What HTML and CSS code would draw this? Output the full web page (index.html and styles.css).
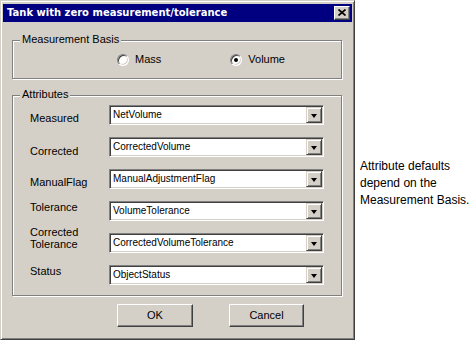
FILE: index.html
```html
<!DOCTYPE html>
<html>
<head>
<meta charset="utf-8">
<link rel="stylesheet" href="styles.css">
</head>
<body>
<div class="page">
  <div class="dialog">
    <div class="titlebar">
      <span class="title">Tank with zero measurement/tolerance</span>
      <span class="close">
        <svg width="8" height="7" viewBox="0 0 8 7"><path d="M0.5 0.5 L7.5 6.5 M7.5 0.5 L0.5 6.5" stroke="#000" stroke-width="1.7" fill="none"/></svg>
      </span>
    </div>

    <div class="group basis">
      <span class="legend">Measurement Basis</span>
      <label class="radio"><span class="radio-dot"></span><span>Mass</span></label>
      <label class="radio vol"><span class="radio-dot checked"></span><span>Volume</span></label>
    </div>

    <div class="group attrs">
      <span class="legend">Attributes</span>
      <div class="grid">
        <div class="lbl low">Measured</div>
        <div class="combo"><span class="val">NetVolume</span><span class="drop"><i></i></span></div>
        <div class="lbl lower">Corrected</div>
        <div class="combo"><span class="val">CorrectedVolume</span><span class="drop"><i></i></span></div>
        <div class="lbl low">ManualFlag</div>
        <div class="combo"><span class="val">ManualAdjustmentFlag</span><span class="drop"><i></i></span></div>
        <div class="lbl">Tolerance</div>
        <div class="combo"><span class="val">VolumeTolerance</span><span class="drop"><i></i></span></div>
        <div class="lbl up">Corrected<br>Tolerance</div>
        <div class="combo"><span class="val">CorrectedVolumeTolerance</span><span class="drop"><i></i></span></div>
        <div class="lbl">Status</div>
        <div class="combo"><span class="val">ObjectStatus</span><span class="drop"><i></i></span></div>
      </div>
    </div>

    <div class="buttons">
      <div class="btn ok">OK</div>
      <div class="btn cancel">Cancel</div>
    </div>
  </div>

  <div class="note">Attribute defaults<br>depend on the<br>Measurement Basis.</div>
</div>
</body>
</html>
```

FILE: styles.css
```css
html, body {
  margin: 0;
  padding: 0;
  background: #ffffff;
}

.page {
  display: flex;
  align-items: flex-start;
  font-family: "Liberation Sans", Arial, sans-serif;
  font-size: 11px;
  color: #000;
}

.dialog {
  box-sizing: border-box;
  width: 355px;
  height: 340px;
  background: #d4d0c8;
  border: 1px solid;
  border-color: #d4d0c8 #404040 #404040 #d4d0c8;
  box-shadow: inset 1px 1px 0 #ffffff, inset -1px -1px 0 #808080;
  padding: 3px 2px 0 2px;
  display: flex;
  flex-direction: column;
}

.titlebar {
  height: 18px;
  background: #000080;
  display: flex;
  align-items: center;
  justify-content: space-between;
  padding: 0 2px 0 4px;
}

.title {
  color: #ffffff;
  font-family: "DejaVu Sans", Tahoma, sans-serif;
  font-weight: bold;
  font-size: 10px;
  line-height: 18px;
  white-space: nowrap;
}

.close {
  box-sizing: border-box;
  width: 16px;
  height: 14px;
  background: #d4d0c8;
  border: 1px solid;
  border-color: #ffffff #404040 #404040 #ffffff;
  box-shadow: inset -1px -1px 0 #808080;
  display: flex;
  align-items: center;
  justify-content: center;
  padding: 0 1px 1px 0;
}

.close svg {
  display: block;
}

.group {
  position: relative;
  box-sizing: border-box;
  width: 330px;
  margin-left: 9px;
  border: 1px solid #808080;
  box-shadow: inset 1px 1px 0 #ffffff, 1px 1px 0 #ffffff;
}

.legend {
  position: absolute;
  top: -8px;
  left: 7px;
  padding: 0 2px;
  line-height: 13px;
  background: #d4d0c8;
  white-space: nowrap;
}

.basis {
  margin-top: 18px;
  height: 39px;
  display: flex;
  align-items: center;
  padding-left: 104px;
}

.radio {
  display: flex;
  align-items: center;
  gap: 6px;
  line-height: 13px;
}

.radio.vol {
  margin-left: 69px;
}

.radio-dot {
  box-sizing: border-box;
  width: 12px;
  height: 12px;
  border-radius: 50%;
  background: #ffffff;
  border: 1px solid;
  border-color: #808080 #ffffff #ffffff #808080;
  box-shadow: inset 1px 1px 0 #404040, inset -1px -1px 0 #d4d0c8;
  display: flex;
  align-items: center;
  justify-content: center;
}

.radio-dot.checked::after {
  content: "";
  width: 4px;
  height: 4px;
  border-radius: 50%;
  background: #000;
}

.attrs {
  margin-top: 16px;
  height: 201px;
  padding: 9px 0 0 17px;
}

.grid {
  display: grid;
  grid-template-columns: 79px 215px;
  grid-auto-rows: 20px;
  row-gap: 12px;
}

.lbl {
  line-height: 13px;
  align-self: start;
  white-space: nowrap;
}

.lbl.low { margin-top: 7px; }
.lbl.lower { margin-top: 8px; }
.lbl.up { margin-top: -7px; line-height: 12px; }

.combo {
  box-sizing: border-box;
  height: 20px;
  background: #ffffff;
  border: 1px solid;
  border-color: #808080 #ffffff #ffffff #808080;
  box-shadow: inset 1px 1px 0 #404040, inset -1px -1px 0 #d4d0c8;
  display: flex;
  align-items: center;
  justify-content: space-between;
  padding: 1px 1px 1px 1px;
}

.val {
  font-size: 10px;
  line-height: 16px;
  padding-left: 2px;
  white-space: nowrap;
}

.drop {
  box-sizing: border-box;
  width: 16px;
  height: 16px;
  background: #d4d0c8;
  border: 1px solid;
  border-color: #d4d0c8 #404040 #404040 #d4d0c8;
  box-shadow: inset 1px 1px 0 #ffffff, inset -1px -1px 0 #808080;
  display: flex;
  align-items: center;
  justify-content: center;
}

.drop i {
  width: 0;
  height: 0;
  border-left: 3.5px solid transparent;
  border-right: 3.5px solid transparent;
  border-top: 4px solid #000;
  margin-top: 1px;
}

.buttons {
  display: flex;
  margin-top: 8px;
  padding-left: 114px;
  gap: 36px;
}

.btn {
  box-sizing: border-box;
  height: 23px;
  background: #d4d0c8;
  border: 1px solid;
  border-color: #ffffff #404040 #404040 #ffffff;
  box-shadow: inset -1px -1px 0 #808080;
  display: flex;
  align-items: center;
  justify-content: center;
  line-height: 13px;
}

.btn.ok { width: 76px; }
.btn.cancel { width: 75px; }

.note {
  margin-left: 5px;
  margin-top: 158px;
  font-size: 12px;
  line-height: 17px;
  color: #000;
}
```
